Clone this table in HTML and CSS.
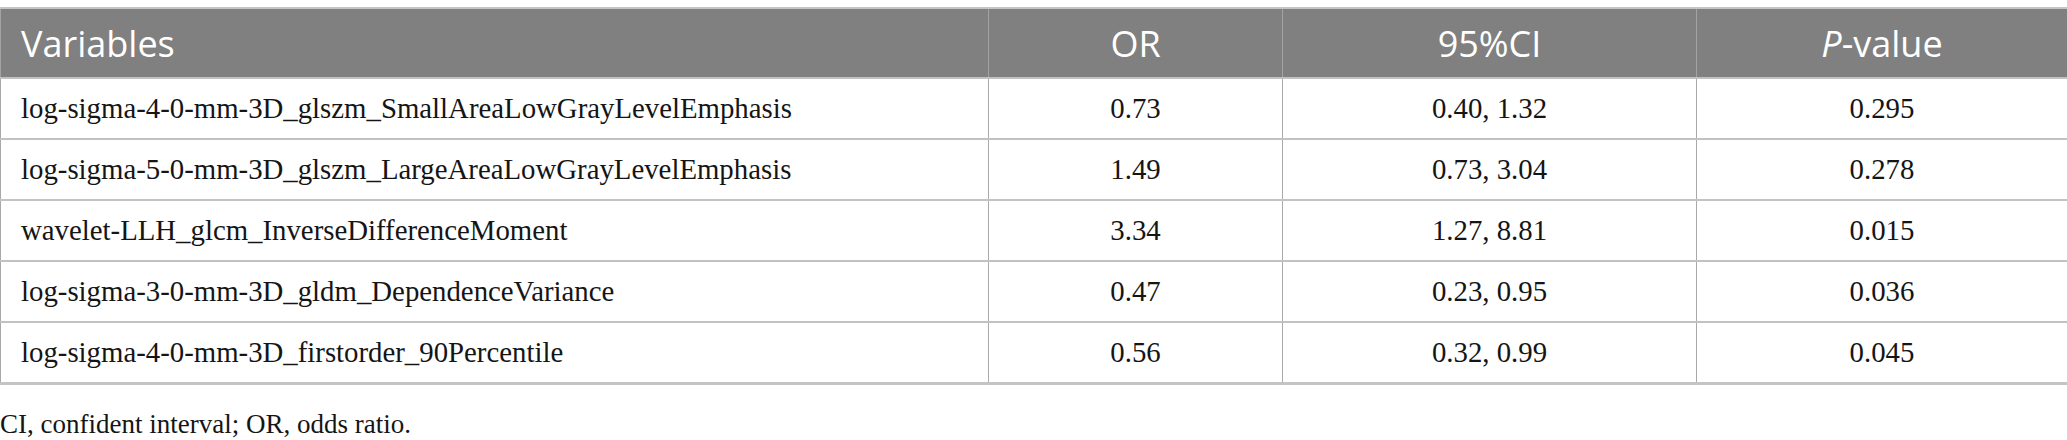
FILE: index.html
```html
<!DOCTYPE html>
<html lang="en">
<head>
<meta charset="utf-8">
<title>Table</title>
<link rel="stylesheet" href="styles.css">
</head>
<body>
<div class="wrap">
  <table class="tbl">
    <colgroup>
      <col class="c1"><col class="c2"><col class="c3"><col class="c4">
    </colgroup>
    <thead>
      <tr><th class="left">Variables</th><th>OR</th><th>95%CI</th><th><i>P</i>-value</th></tr>
    </thead>
    <tbody>
      <tr><td class="var">log-sigma-4-0-mm-3D_glszm_SmallAreaLowGrayLevelEmphasis</td><td>0.73</td><td>0.40, 1.32</td><td>0.295</td></tr>
      <tr><td class="var">log-sigma-5-0-mm-3D_glszm_LargeAreaLowGrayLevelEmphasis</td><td>1.49</td><td>0.73, 3.04</td><td>0.278</td></tr>
      <tr><td class="var">wavelet-LLH_glcm_InverseDifferenceMoment</td><td>3.34</td><td>1.27, 8.81</td><td>0.015</td></tr>
      <tr><td class="var">log-sigma-3-0-mm-3D_gldm_DependenceVariance</td><td>0.47</td><td>0.23, 0.95</td><td>0.036</td></tr>
      <tr><td class="var">log-sigma-4-0-mm-3D_firstorder_90Percentile</td><td>0.56</td><td>0.32, 0.99</td><td>0.045</td></tr>
    </tbody>
  </table>
  <p class="note">CI, confident interval; OR, odds ratio.</p>
</div>
</body>
</html>
```

FILE: styles.css
```css
html, body {
  margin: 0;
  padding: 0;
  background: #ffffff;
}

.wrap {
  padding-top: 7px;
}

.tbl {
  border-collapse: collapse;
  table-layout: fixed;
  width: 2067px;
}

.c1 { width: 988px; }
.c2 { width: 294px; }
.c3 { width: 414px; }
.c4 { width: 371px; }

.tbl th {
  background: #7f807f;
  color: #ffffff;
  font-family: "Open Sans", "Noto Sans", sans-serif;
  font-weight: 400;
  font-size: 36px;
  height: 68px;
  padding: 0;
  text-align: center;
  border-top: 2px solid #c4c4c4;
  border-left: 1px solid #a3a3a3;
  border-right: 1px solid #a3a3a3;
}

.tbl th.left {
  text-align: left;
  padding-left: 20px;
}

.tbl td {
  font-family: "Liberation Serif", "Times New Roman", serif;
  font-size: 28.8px;
  color: #151515;
  height: 59px;
  padding: 0;
  text-align: center;
  border-left: 1px solid #a9a9a9;
  border-right: 1px solid #a9a9a9;
  border-top: 2px solid #c2c2c2;
}

.tbl td.var {
  text-align: left;
  padding-left: 20px;
}

.tbl tbody tr:last-child td {
  border-bottom: 3px solid #c4c4c4;
}

.note {
  font-family: "Liberation Serif", "Times New Roman", serif;
  font-size: 27px;
  color: #151515;
  margin: 24px 0 0 0;
}
```
